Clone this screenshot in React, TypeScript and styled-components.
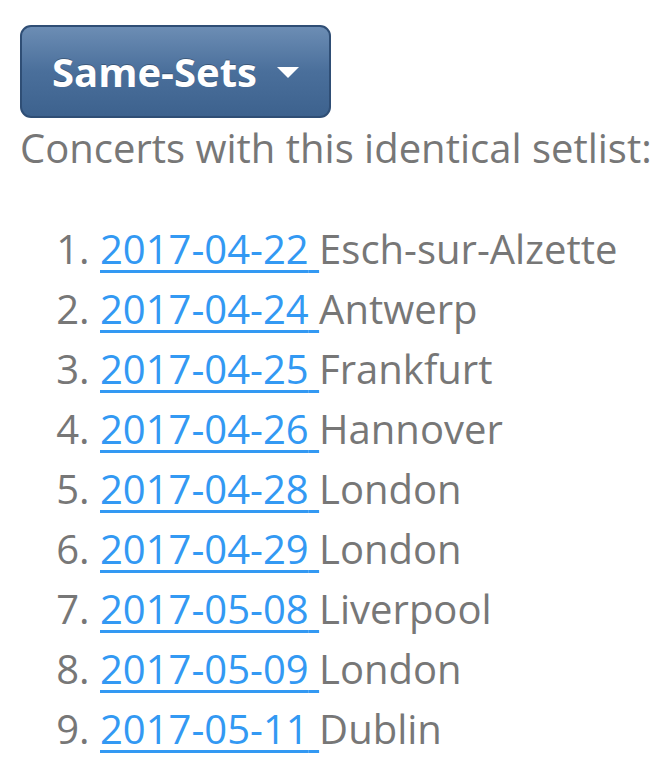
import React from "react";
import styled, { createGlobalStyle } from "styled-components";

const Global = createGlobalStyle`
  html, body { margin: 0; padding: 0; background: #fff; }
  body { font-family: "Open Sans", "Noto Sans", sans-serif; }
`;

const Page = styled.div`
  padding: 25px 0 0 20px;
  font-size: 40px;
  line-height: 60px;
  color: #777777;
`;

const DropButton = styled.button`
  display: inline-flex;
  align-items: center;
  gap: 20px;
  box-sizing: border-box;
  height: 93px;
  padding: 0 30px 0 30px;
  border: 2px solid #2f4e75;
  border-radius: 11px;
  background: linear-gradient(to bottom, #6c8db4 0%, #4a6f9b 50%, #3d628e 100%);
  color: #ffffff;
  font-family: "Open Sans", "Noto Sans", sans-serif;
  font-weight: 700;
  font-size: 40px;
  text-shadow: 0 -1px 0 rgba(0, 0, 0, 0.25);
  cursor: pointer;
`;

const Caret = styled.span`
  width: 0;
  height: 0;
  border-left: 11px solid transparent;
  border-right: 11px solid transparent;
  border-top: 11px solid #ffffff;
  margin-top: 2px;
`;

const Intro = styled.p`
  margin: 0;
  height: 60px;
  white-space: nowrap;
`;

const List = styled.ol`
  margin: 41px 0 0 0;
  padding: 0 0 0 80px;
`;

const Item = styled.li`
  line-height: 60px;
  white-space: nowrap;
`;

const DateLink = styled.a`
  color: #3399f3;
  text-decoration: underline;
  text-decoration-thickness: 3px;
  text-underline-offset: 6px;
`;

const concerts: [string, string][] = [
  ["2017-04-22", "Esch-sur-Alzette"],
  ["2017-04-24", "Antwerp"],
  ["2017-04-25", "Frankfurt"],
  ["2017-04-26", "Hannover"],
  ["2017-04-28", "London"],
  ["2017-04-29", "London"],
  ["2017-05-08", "Liverpool"],
  ["2017-05-09", "London"],
  ["2017-05-11", "Dublin"],
];

export default function App() {
  return (
    <>
      <Global />
      <Page>
        <DropButton type="button">
          Same-Sets
          <Caret />
        </DropButton>
        <Intro>Concerts with this identical setlist:</Intro>
        <List>
          {concerts.map(([d, c]) => (
            <Item key={d}>
              <DateLink href="#">{d} </DateLink>
              {c}
            </Item>
          ))}
        </List>
      </Page>
    </>
  );
}
